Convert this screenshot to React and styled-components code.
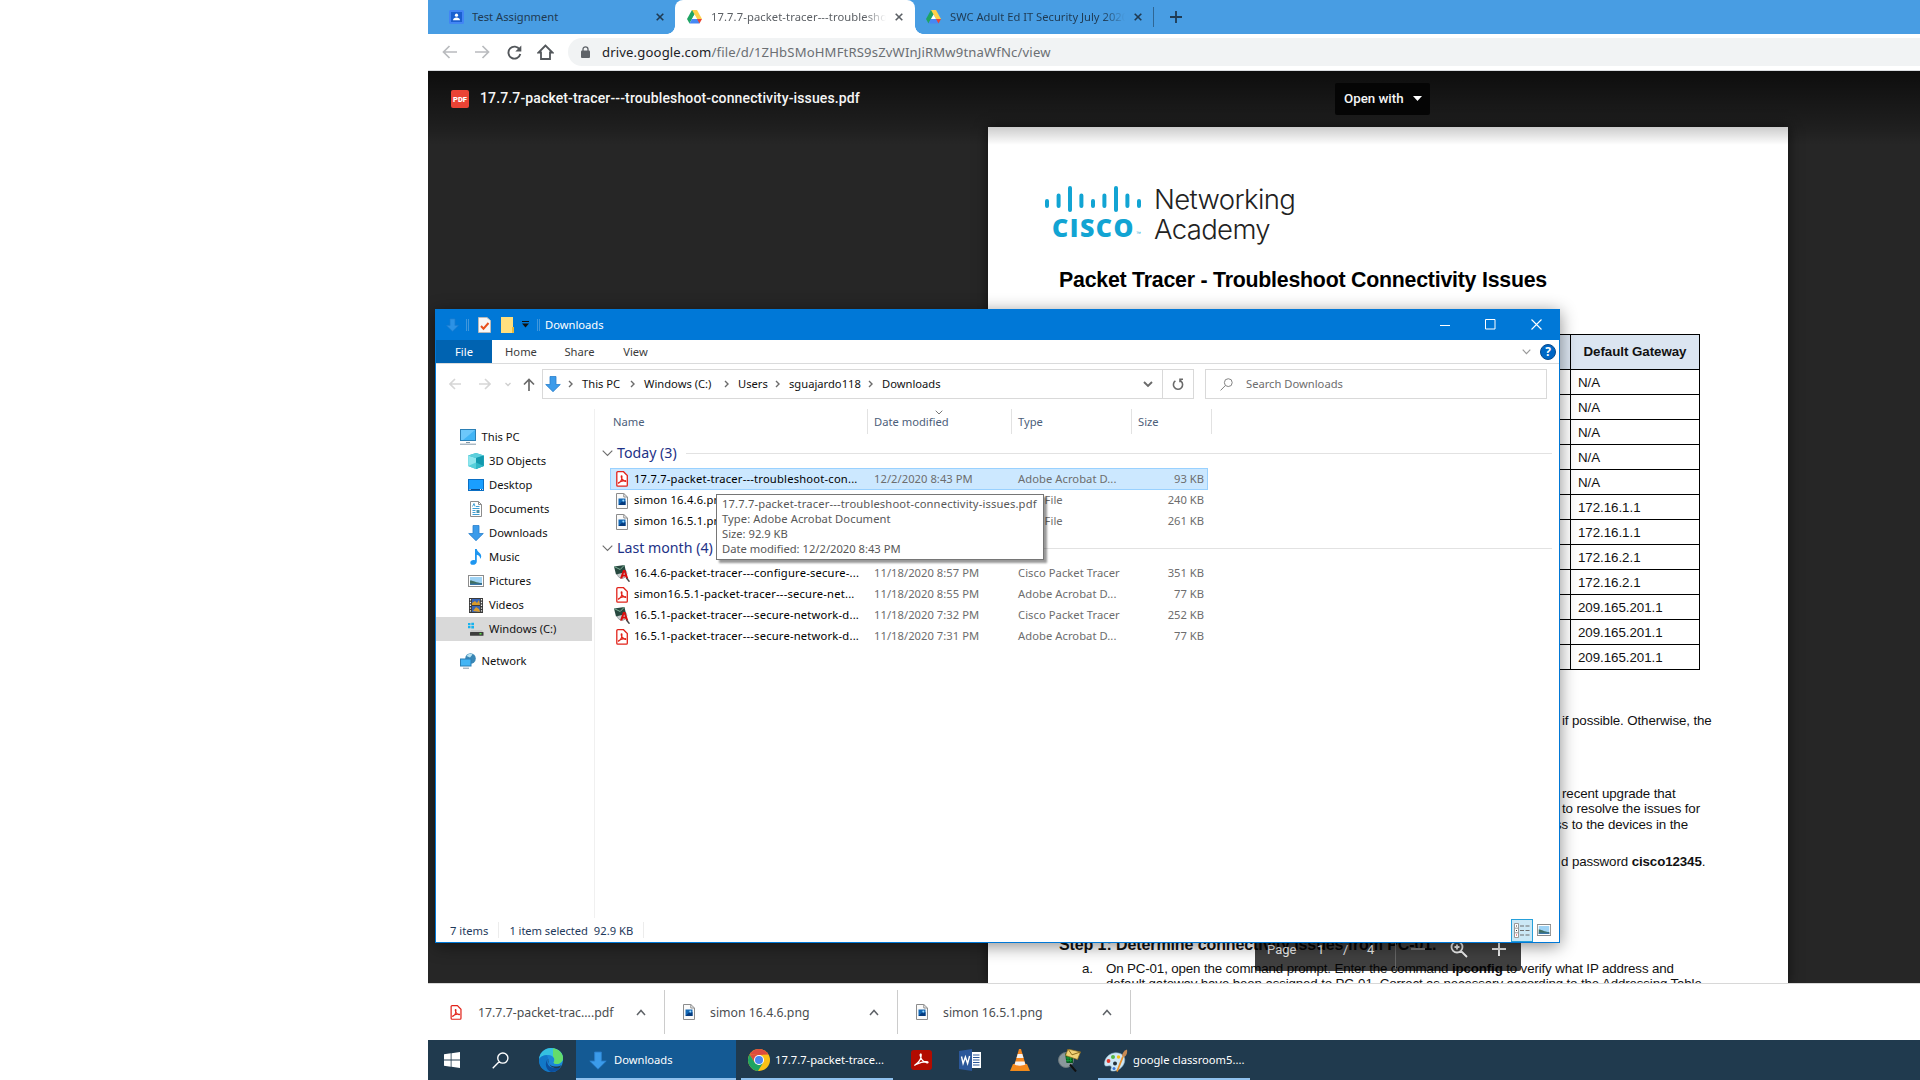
import React from "react";
import styled, { createGlobalStyle, css } from "styled-components";

const UI = `"Noto Sans", "Open Sans", sans-serif`;
const ARIAL = `"Liberation Sans", Arial, sans-serif`;

const GlobalStyle = createGlobalStyle`
  *, *::before, *::after { box-sizing: border-box; }
  html, body { margin: 0; padding: 0; background: #fff; overflow: hidden; }
  svg { display: block; flex: none; }
`;

/* ---------- shell ---------- */
const Desktop = styled.div`
  display: flex;
  justify-content: flex-end;
  width: 1920px;
  height: 1080px;
  overflow: hidden;
  background: #fff;
  font-family: ${UI};
  font-size: 11.2px;
`;
const Screen = styled.div`
  position: relative;
  display: flex;
  flex-direction: column;
  width: 1492px;
  height: 1080px;
  overflow: hidden;
`;
const Label = styled.span`
  display: block;
  flex: none;
  white-space: nowrap;
  width: ${(p) => (p.$w ? `${p.$w}px` : "auto")};
  margin-left: ${(p) => p.$ml || 0}px;
  padding-bottom: ${(p) => (p.$up ? 2 : 0)}px;
  font-size: ${(p) => (p.$size ? `${p.$size}px` : "inherit")};
  letter-spacing: ${(p) => p.$ls || 0}px;
  text-align: ${(p) => p.$align || "left"};
`;
const IconBox = styled.span`
  display: flex;
  flex: none;
  align-items: center;
  justify-content: center;
  width: ${(p) => p.$w}px;
  margin-left: ${(p) => p.$ml || 0}px;
`;

/* ---------- browser ---------- */
const TabStrip = styled.div`
  display: flex;
  align-items: center;
  flex: none;
  height: 34px;
  background: #489de3;
`;
const Tab = styled.div`
  position: relative;
  display: flex;
  align-items: center;
  flex: none;
  width: ${(p) => p.$w}px;
  height: 34px;
  padding-left: ${(p) => p.$pl}px;
  color: #1f3a52;
  ${(p) =>
    p.$active &&
    css`
      background: #fff;
      color: #5c6065;
      border-radius: 8px 8px 0 0;
      &::before, &::after {
        content: "";
        position: absolute;
        bottom: 0;
        width: 8px;
        height: 8px;
      }
      &::before { left: -8px; background: radial-gradient(circle at 0 0, transparent 7.5px, #fff 8px); }
      &::after { right: -8px; background: radial-gradient(circle at 100% 0, transparent 7.5px, #fff 8px); }
    `}
`;
const TabTitle = styled.span`
  flex: none;
  width: ${(p) => p.$w}px;
  margin-left: ${(p) => p.$ml || 8}px;
  padding-bottom: 2px;
  overflow: hidden;
  white-space: nowrap;
  letter-spacing: ${(p) => p.$ls || 0}px;
  ${(p) => p.$fade && css`mask-image: linear-gradient(to right, #000 calc(100% - 22px), transparent);`}
`;
const TabDivider = styled.span`
  width: 1px;
  height: 20px;
  background: #2f6694;
`;
const AddressRow = styled.div`
  display: flex;
  align-items: center;
  flex: none;
  height: 37px;
  padding-left: 14px;
  border-bottom: 1px solid #dadce0;
  background: #fff;
`;
const Omnibox = styled.div`
  display: flex;
  align-items: center;
  flex: 1;
  height: 28px;
  margin-left: 13px;
  padding-left: 13px;
  border-radius: 14px 0 0 14px;
  background: #f1f3f4;
  font-size: 13.1px;
  color: #6b6f73;
  b { font-weight: 400; color: #202124; }
`;
const Viewer = styled.main`
  position: relative;
  display: flex;
  flex: none;
  height: 912px;
  padding: 56px 0 0 560px;
  overflow: hidden;
  background: #262626;
`;
const ViewerHeader = styled.header`
  position: absolute;
  z-index: 2;
  inset: 0 0 auto 0;
  display: flex;
  align-items: center;
  height: 74px;
  padding: 0 0 19px 23px;
  background: linear-gradient(to bottom, rgba(0,0,0,.65), rgba(0,0,0,.2) 56px, rgba(0,0,0,0));
  color: #f5f5f5;
  font-family: Roboto, sans-serif;
  font-weight: 500;
`;
const OpenWith = styled.div`
  display: flex;
  align-items: center;
  width: 95px;
  height: 32px;
  margin-left: auto;
  margin-right: 490px;
  padding-left: 9px;
  border-radius: 2px;
  background: #050505;
`;
const Page = styled.article`
  width: 800px;
  height: 856px;
  padding: 58px 0 0 71px;
  overflow: hidden;
  background: #fff;
  box-shadow: 0 0 12px rgba(0,0,0,.6);
  font-family: ${ARIAL};
  font-size: 13.33px;
  color: #111;
`;
const Brand = styled.div`
  display: flex;
  height: 60px;
  margin-left: -15px;
`;
const BrandMark = styled.div`
  width: 110px;
`;
const CiscoWord = styled.div`
  display: flex;
  margin: 1px 0 0 8px;
  color: #12a4d3;
  font: 800 25px/28px "Open Sans", sans-serif;
  letter-spacing: ${(p) => p.$ls}px;
  sub { margin-left: 1px; font: 400 5px/40px ${ARIAL}; letter-spacing: 0; }
`;
const BrandName = styled.div`
  color: #222;
  font: 300 27.5px/30px Inter, sans-serif;
  letter-spacing: ${(p) => p.$ls}px;
  white-space: nowrap;
  margin-top: -1px;
`;
const DocTitle = styled.h1`
  margin: 23px 0 0;
  font: 700 21.33px/24px ${ARIAL};
  letter-spacing: ${(p) => p.$ls || 0}px;
  white-space: nowrap;
  color: #000;
`;
const AddressTable = styled.div`
  width: 641px;
  margin-top: 42px;
  border: 1px solid #000;
  border-bottom: 0;
`;
const AddressTableRow = styled.div`
  display: grid;
  grid-template-columns: 1fr 129px;
  height: ${(p) => (p.$head ? 35 : 25)}px;
  border-bottom: 1px solid #000;
  background: ${(p) => (p.$head ? "#dbe5f1" : "#fff")};
  font-weight: ${(p) => (p.$head ? 700 : 400)};
`;
const AddressCell = styled.div`
  display: flex;
  align-items: center;
  justify-content: ${(p) => (p.$center ? "center" : "flex-start")};
  padding-left: ${(p) => (p.$center ? 0 : 7)}px;
  padding-bottom: ${(p) => (p.$center ? 2 : 0)}px;
  letter-spacing: -0.05px;
  border-left: 1px solid #000;
`;
const Paragraph = styled.p`
  margin: ${(p) => p.$mt}px 0 0 ${(p) => p.$ml}px;
  line-height: 15.5px;
  white-space: pre;
  letter-spacing: -0.11px;
`;
const StepHeading = styled.h2`
  margin: 65px 0 0;
  font: 700 16px/20px ${ARIAL};
  letter-spacing: ${(p) => p.$ls || 0}px;
  white-space: nowrap;
`;
const StepItem = styled.div`
  display: grid;
  grid-template-columns: 24px 1fr;
  margin: 6px 0 0 23px;
  line-height: 15.3px;
  white-space: pre;
  letter-spacing: -0.14px;
`;
const PageControls = styled.div`
  position: absolute;
  z-index: 2;
  left: 827px;
  bottom: 12px;
  display: flex;
  align-items: center;
  width: 266px;
  height: 44px;
  padding-left: 12px;
  border-radius: 2px;
  background: rgba(0,0,0,.75);
  color: #eee;
  font: 400 13px Roboto, sans-serif;
`;
const ControlDivider = styled.span`
  width: 1px;
  height: 40px;
  margin: 0 15px 0 18px;
  background: #666;
`;

/* ---------- download shelf ---------- */
const Shelf = styled.footer`
  display: flex;
  align-items: center;
  flex: none;
  height: 57px;
  border-top: 1px solid #d8d8d8;
  background: #fff;
  color: #4a4d50;
  font-size: 12.3px;
`;
const ShelfItem = styled.div`
  display: flex;
  align-items: center;
  flex: none;
  width: ${(p) => p.$w}px;
  height: 44px;
  padding-left: ${(p) => p.$pl}px;
  border-right: 1px solid #ccc;
`;
const Spacer = styled.span`
  flex: 1;
`;
const ShelfChevron = styled.span`
  margin-right: 18px;
`;

/* ---------- taskbar ---------- */
const Taskbar = styled.nav`
  display: flex;
  flex: none;
  height: 40px;
  background: #203a4e;
  color: #fff;
`;
const TaskButton = styled.div`
  display: flex;
  align-items: center;
  flex: none;
  width: ${(p) => p.$w}px;
  height: 40px;
  margin-left: ${(p) => p.$ml || 0}px;
  padding-left: ${(p) => p.$pl || 0}px;
  background: ${(p) => (p.$active ? "#145a94" : "transparent")};
  border-bottom: ${(p) => (p.$open ? "2px solid #8fc1ee" : "0")};
  padding-top: ${(p) => (p.$open ? 2 : 0)}px;
`;

/* ---------- explorer ---------- */
const ExplorerWindow = styled.section`
  position: absolute;
  z-index: 5;
  left: 7px;
  top: 309px;
  display: flex;
  flex-direction: column;
  width: 1125px;
  height: 634px;
  border: 1px solid #0078d7;
  background: #fff;
  box-shadow: 0 3px 16px rgba(0,0,0,.45);
  color: #111;
`;
const TitleBar = styled.div`
  display: flex;
  align-items: center;
  flex: none;
  height: 30px;
  padding-bottom: 1px;
  background: #0078d7;
  color: #fff;
`;
const QuickDivider = styled.span`
  flex: none;
  width: 3px;
  height: 12px;
  margin-left: ${(p) => p.$ml}px;
  border: solid #3f97dd;
  border-width: 0 1px;
`;
const Ribbon = styled.div`
  display: flex;
  align-items: stretch;
  flex: none;
  height: 24px;
  border-bottom: 1px solid #dadbdc;
`;
const RibbonTab = styled.div`
  display: flex;
  align-items: center;
  justify-content: center;
  width: ${(p) => p.$w}px;
  height: 23px;
  background: ${(p) => (p.$primary ? "#0063b1" : "transparent")};
  color: ${(p) => (p.$primary ? "#fff" : "#3b3b3b")};
`;
const RibbonTools = styled.div`
  display: flex;
  align-items: center;
  gap: 9px;
  margin-left: auto;
  padding-right: 3px;
`;
const HelpBadge = styled.span`
  display: flex;
  align-items: center;
  justify-content: center;
  width: 16px;
  height: 16px;
  border: 1px solid #0a4a8c;
  border-radius: 50%;
  background: #0067c5;
  color: #fff;
  font: 700 12px ${UI};
`;
const NavBar = styled.div`
  display: flex;
  align-items: center;
  flex: none;
  height: 30px;
  margin-top: 5px;
  padding-left: 13px;
`;
const PathBox = styled.div`
  display: flex;
  align-items: center;
  flex: none;
  width: 652px;
  height: 30px;
  margin-left: 7px;
  padding-left: 2px;
  border: 1px solid #d9d9d9;
`;
const RefreshCell = styled.div`
  display: flex;
  align-items: center;
  justify-content: center;
  width: 31px;
  height: 28px;
  border-left: 1px solid #d9d9d9;
`;
const SearchBox = styled.div`
  display: flex;
  align-items: center;
  width: 342px;
  height: 30px;
  margin-left: 11px;
  padding-left: 14px;
  border: 1px solid #d9d9d9;
  color: #6d6d6d;
`;
const Panes = styled.div`
  display: flex;
  flex: none;
  height: 509px;
  margin-top: 10px;
`;
const Tree = styled.aside`
  display: flex;
  flex-direction: column;
  flex: none;
  width: 159px;
  padding-top: 16px;
  border-right: 1px solid #f0f0f0;
`;
const TreeRow = styled.div`
  display: flex;
  align-items: center;
  width: 156px;
  height: 24px;
  margin-top: ${(p) => p.$mt || 0}px;
  padding-left: ${(p) => (p.$root ? 24 : 32)}px;
  background: ${(p) => (p.$selected ? "#d9d9d9" : "transparent")};
  gap: 5px;
`;
const FilePane = styled.div`
  flex: 1;
  display: flex;
  flex-direction: column;
`;
const ColumnHeads = styled.div`
  display: flex;
  height: 25px;
  color: #4c607a;
`;
const ColumnHead = styled.div`
  position: relative;
  display: flex;
  align-items: center;
  flex: none;
  width: ${(p) => p.$w}px;
  padding-left: ${(p) => p.$pl || 6}px;
  border-right: 1px solid #e2e2e2;
`;
const SortMark = styled.span`
  position: absolute;
  left: 67px;
  top: 1px;
`;
const GroupHead = styled.div`
  display: flex;
  align-items: center;
  height: 22px;
  margin-top: ${(p) => p.$mt}px;
  padding: 0 7px 0 7px;
  color: #1e3287;
  font-size: 14.2px;
`;
const GroupRule = styled.span`
  flex: 1;
  height: 1px;
  margin-left: 8px;
  background: #e2e2e2;
`;
const FileRow = styled.div`
  display: grid;
  grid-template-columns: 258px 144px 186px;
  align-items: center;
  width: 598px;
  height: ${(p) => (p.$selected ? 22 : 21)}px;
  margin-left: 15px;
  padding-left: 5px;
  border: 1px solid ${(p) => (p.$selected ? "#99d1ff" : "transparent")};
  background: ${(p) => (p.$selected ? "#cce8ff" : "transparent")};
  color: #6d6d6d;
`;
const FileMeta = styled.div`
  display: flex;
  justify-content: space-between;
`;
const FileList = styled.div`
  margin-top: ${(p) => p.$mt}px;
`;
const FileName = styled.div`
  display: flex;
  align-items: center;
  gap: 6px;
  color: #000;
`;
const Tooltip = styled.div`
  position: absolute;
  left: 280px;
  top: 184px;
  width: 328px;
  height: 66px;
  padding: 1px 0 0 5px;
  border: 1px solid #767676;
  background: #fff;
  box-shadow: 3px 3px 2px rgba(0,0,0,.4);
  color: #575757;
  line-height: 15px;
`;
const StatusBar = styled.div`
  display: flex;
  align-items: center;
  flex: none;
  height: 24px;
  padding-left: 14px;
  color: #1e395b;
`;
const StatusDivider = styled.span`
  width: 1px;
  height: 16px;
  margin: 0 10px;
  background: #ececec;
`;
const ViewToggle = styled.span`
  display: flex;
  align-items: center;
  justify-content: center;
  width: 22px;
  height: 23px;
  border: 1px solid #26a0da;
  background: #cbe8f6;
`;

/* ---------- icons ---------- */
const Stroke = ({ w = 12, h = 12, d, c = "#666", sw = 1.5, box }) => (
  <svg width={w} height={h} viewBox={box || `0 0 ${w} ${h}`} fill="none" stroke={c} strokeWidth={sw}>
    <path d={d} />
  </svg>
);
const CloseX = ({ c, s = 8 }) => <Stroke w={s} h={s} box="0 0 8 8" d="M.7.7l6.6 6.6M7.3.7L.7 7.3" c={c} sw={1.6} />;
const Crumb = () => <Stroke w={5} h={8} d="M1 1l3 3-3 3" c="#6b6b6b" sw={1.4} />;
const DownArrow = ({ w = 16, h = 16, o = 1 }) => (
  <svg width={w} height={h} viewBox="0 0 16 16" opacity={o}>
    <path d="M5 .5h6v8h4.3L8 15.700.7 8.500H5z" fill="#3b9bea" stroke="#2a7fcb" strokeWidth=".8" />
  </svg>
);
const Classroom = () => (
  <svg width="15" height="14" viewBox="0 0 15 14">
    <rect width="15" height="14" rx="1.500" fill="#4285f4" />
    <rect x="2" y="2" width="11" height="10" fill="#1a5fd0" />
    <circle cx="7.500" cy="5.200" r="1.600" fill="#fff" />
    <path d="M4 10.200c0-3.600 7-3.600 7 0z" fill="#fff" />
  </svg>
);
const Drive = () => (
  <svg width="15" height="14" viewBox="0 0 15 14">
    <path d="M5 0h5L5 9 2.500 13.500 0 9z" fill="#1fa463" />
    <path d="M5 0h5l5 9h-5z" fill="#ffd04b" />
    <path d="M2.500 13.500L5 9h7l.500 4.500z" fill="#4688f4" />
    <path d="M10 9h5l-2.500 4.500z" fill="#ea4335" />
    <path d="M7.500 4.500L5 9h5z" fill="#fff" />
  </svg>
);
const PdfFile = ({ w = 12, h = 16 }) => (
  <svg width={w} height={h} viewBox="0 0 12 16" fill="none" stroke="#e2231a">
    <path d="M1.800.700h5.700L11.300 4.500v9.700a1 1 0 0 1-1 1H1.800a1 1 0 0 1-1-1V1.700a1 1 0 0 1 1-1z" fill="#fff" strokeWidth="1.300" />
    <path d="M2.800 12c2-1.300 3.200-4 3.200-6.500 0-1-1-.8-.8.300.4 2.200 2 4 4 4.600 1 .2.800-.9-.3-.8-2.200 0-4.300.7-6 1.800-.8.500-.5 1-.1.600z" strokeWidth="1.100" />
  </svg>
);
const PngFile = ({ w = 12, h = 16 }) => (
  <svg width={w} height={h} viewBox="0 0 12 16">
    <path d="M.500.500h7.300L11.500 4v11.500H.500z" fill="#fafafa" stroke="#8c8c8c" />
    <path d="M7.800.500V4h3.700" fill="none" stroke="#8c8c8c" />
    <rect x="2.500" y="5.500" width="7" height="6.500" fill="#1267b4" />
    <path d="M2.500 12l3.500-3.500 1.500 1L9.500 8v4z" fill="#063a7d" />
    <circle cx="7.300" cy="7.400" r="1" fill="#9fdcff" />
  </svg>
);
const PktFile = () => (
  <svg width="16" height="17" viewBox="0 0 16 17">
    <circle cx="8" cy="8.500" r="4.800" fill="#c9ced0" stroke="#a0a6a8" />
    <path d="M0 1.500L10.500 0l1.500 7L2 9.500z" fill="#27483f" />
    <path d="M0 1.500l6.200 3L10.500 0" fill="none" stroke="#7fb39a" />
    <path d="M6 13.500L9 5h2.300l3 8.500h-2.300l-.6-1.900H8.900l-.6 1.900zM9.400 9.700h1.600L10.200 7.200z" fill="#d90d0d" />
    <path d="M12.500 13l3 3.700" stroke="#444" strokeWidth="1.500" />
  </svg>
);
const PcIcon = () => (
  <svg width="16" height="16" viewBox="0 0 16 16">
    <rect x=".5" y=".5" width="15" height="11" fill="#43b5f5" stroke="#2b7fb5" />
    <path d="M1 1h14L3 11H1z" fill="#8ad6ff" opacity=".6" />
    <path d="M6 13.500h4M0 15.200h16" stroke="#8499a8" />
  </svg>
);
const CubeIcon = () => (
  <svg width="16" height="16" viewBox="0 0 16 16">
    <path d="M8 0l7.800 2.500v10.500L8 16 .2 13V2.500z" fill="#26b2c4" />
    <path d="M.2 2.500L8 5v11L.2 13z" fill="#8fe6ee" />
    <path d="M8 0l7.800 2.500L8 5 .2 2.500z" fill="#5ccfdc" />
    <path d="M8 5l7.800-2.500v10.500L8 16z" fill="#1199ae" />
    <path d="M8 9.500L15.800 13 8 16 .2 13z" fill="#3dc4d2" opacity=".7" />
  </svg>
);
const DesktopIcon = () => (
  <svg width="16" height="12" viewBox="0 0 16 12">
    <rect x=".5" y=".5" width="15" height="11" fill="#1a9fff" stroke="#0b6fc4" />
    <path d="M1 10.500h14" stroke="#0a4f94" />
    <path d="M1.500 10.500h1M12 10.500h1M14 10.500h.8" stroke="#fff" />
  </svg>
);
const DocIcon = () => (
  <svg width="12" height="16" viewBox="0 0 12 16">
    <path d="M.500.500H8.500L11.500 3.500v12H.500z" fill="#fff" stroke="#8c8c8c" />
    <path d="M8.500.500v3h3" fill="none" stroke="#8c8c8c" />
    <path d="M2.500 5.500L4 2.500l1 3M6 5.500h3.500M2.500 7.500h7M2.500 9.500h3M2.500 11.500h3M2.500 13.500h7" fill="none" stroke="#3fa0d6" />
    <rect x="6.500" y="9" width="3" height="3" fill="#4a90a8" />
  </svg>
);
const MusicIcon = () => (
  <svg width="12" height="16" viewBox="0 0 12 16">
    <path d="M5 0h1.800c.3 3 4.700 4 4.400 7.500-.1 1.300-.7 2-1.200 2.500.4-2.500-1-3.700-3.200-4.300V12.500c0 4-6.500 4.500-6.500 1.200 0-2.200 2.500-3.200 4.700-2.400z" fill="#1e96f0" />
  </svg>
);
const PictureIcon = ({ w = 16, h = 12 }) => (
  <svg width={w} height={h} viewBox="0 0 16 12" preserveAspectRatio="none">
    <rect x=".5" y=".5" width="15" height="11" fill="#fff" stroke="#8c8c8c" />
    <rect x="2" y="2" width="12" height="8" fill="#9fd3f5" />
    <path d="M2 5.500c4 0 6 2.500 12 2.500v2H2z" fill="#3f6f63" />
    <path d="M2 8.600h12V10H2z" fill="#3a76a8" />
  </svg>
);
const VideoIcon = () => (
  <svg width="14" height="15" viewBox="0 0 14 15">
    <rect width="14" height="15" fill="#3a3a3a" />
    <rect x="3" y="1" width="8" height="6" fill="#3866b8" />
    <rect x="3" y="8" width="8" height="6" fill="#3866b8" />
    <path d="M3 5l3-2 2 2 2-3 1 5H3zM4 13l3-4 3 2 1 3z" fill="#d89b2c" />
    <path d="M1.500 1v14M12.500 1v14" stroke="#f2f2f2" strokeWidth="1.200" strokeDasharray="1.400 1.400" />
  </svg>
);
const DriveDisk = () => (
  <svg width="16" height="14" viewBox="0 0 16 14">
    <path d="M0 1h2.500v2.300H0zM3.300.700H6v2.600H3.300zM0 4h2.500v2.300H0zM3.300 4H6v2.600H3.300z" fill="#19b3ee" />
    <path d="M3 8h11l1 2H2z" fill="#c9c9c9" />
    <rect x="2" y="10" width="13.500" height="3.700" rx=".5" fill="#3d3d3d" />
    <rect x="11.500" y="11" width="2" height="1.500" fill="#5ee04b" />
  </svg>
);
const NetworkIcon = () => (
  <svg width="16" height="16" viewBox="0 0 16 16">
    <circle cx="10.500" cy="5.500" r="5.300" fill="#3a87b5" />
    <path d="M6.500 3c2-2.600 5-2.500 6-1.500L10 4.500z" fill="#b9e3f2" />
    <rect x=".5" y="6" width="10.500" height="7" fill="#43b5f5" stroke="#2b7fb5" />
    <path d="M3 15.200h6" stroke="#8499a8" />
  </svg>
);
const Edge = () => (
  <svg width="24" height="24" viewBox="0 0 24 24">
    <circle cx="12" cy="12" r="12" fill="#1b86d8" />
    <path d="M0 11C1 4 6 0 12 0c8 0 12 5.500 12 10 0 4-3.500 6-6.500 6-2.500 0-3.500-1-2.500-2.500C16.500 11 14 7 9.500 7 5 7 1 9 0 11z" fill="#35c1e0" />
    <path d="M14 .2C20 1 24 5.500 24 10c0 4-3.500 6-6.500 6-2.500 0-3.500-1-2.500-2.500 1-1.700.5-3.500-1-5z" fill="#63dc6c" />
    <path d="M9 10c-4 4-1 13 9 12.500C12 26 0 23.500 0 12c1-3 4-5 8-4.800z" fill="#1278c8" />
    <path d="M9 10.500c-3 6 3 11.500 12.500 9-2 3-6 4.500-9.500 4.500-5-2-7-9-3-13.500z" fill="#0c4f9e" />
    <path d="M9.300 10.300c-1.500 4 1.200 8 6.700 8.200 3 0 5-.6 6.500-1.600-1 2-2 3-3 3.200-6 1-11-3-10.200-9.800z" fill="#203a4e" />
  </svg>
);
const Chrome = () => (
  <svg width="22" height="22" viewBox="0 0 22 22">
    <circle cx="11" cy="11" r="11" fill="#fbc116" />
    <path d="M1.500 5.500A11 11 0 0 1 20.500 5.500L11 6z" fill="#dd4b3e" />
    <path d="M1.500 5.500l5.200 8L11 6z" fill="#dd4b3e" />
    <path d="M1.500 5.500A11 11 0 0 0 10 22l5.200-8.500-4.200 2.500-4.300-2.500z" fill="#1da462" />
    <circle cx="11" cy="11" r="5" fill="#fff" />
    <circle cx="11" cy="11" r="4" fill="#4a86f0" />
  </svg>
);
const Acrobat = () => (
  <svg width="21" height="20" viewBox="0 0 21 20">
    <rect width="21" height="20" rx="3" fill="#b30b00" />
    <path d="M4 15c3-2 6.200-6 6.200-10 0-1.500-1.300-1.200-1 .5.600 3.500 3.500 6.500 6.800 7.300 1.500.2 1.300-1.200-.5-1.200-3.500 0-7 1-10.500 2.700-1.200.8-1.500 1.300-1 .7z" fill="none" stroke="#fff" strokeWidth="1.300" />
  </svg>
);
const Word = () => (
  <svg width="23" height="22" viewBox="0 0 23 22">
    <rect x="11" y="3" width="11" height="16" fill="#fff" />
    <path d="M14 6h6.500M14 8.500h6.500M14 11h6.500M14 13.500h6.500M14 16h6.500" stroke="#2b579a" />
    <path d="M0 2l13-2v22L0 20z" fill="#2b579a" />
    <path d="M2.500 7.500l1.600 7 2.300-6.500 2.200 6.500 2-7.500" fill="none" stroke="#fff" strokeWidth="1.400" />
  </svg>
);
const Vlc = () => (
  <svg width="20" height="22" viewBox="0 0 20 22">
    <path d="M3 15h14l3 7H0z" fill="#f08a1c" />
    <path d="M9 0h2l5 17c-2 2.500-10 2.500-12 0z" fill="#f5861f" />
    <path d="M7.700 5h4.600l1.200 4h-7zM5.500 12.500h9l.9 3c-3 1.500-8 1.500-10.800 0z" fill="#f3f3f3" />
  </svg>
);
const Tracer = () => (
  <svg width="23" height="23" viewBox="0 0 23 23">
    <circle cx="8" cy="11" r="7.500" fill="#8a979c" stroke="#69757a" />
    <path d="M7 4.500h8V14H8.500z" fill="#0c5a22" />
    <path d="M8 6.500h6M8 9h6M8 11.500h6M10 5v8M12.500 5v8" stroke="#17a53a" strokeWidth=".8" />
    <path d="M10 0l12.500 3-3 7.500L7.500 6.500z" fill="#f1d176" stroke="#8a6a1c" strokeWidth=".7" />
    <path d="M10 0l4 5.800L22.500 3" fill="none" stroke="#8a6a1c" />
    <path d="M12 15.500l6 7" stroke="#111" strokeWidth="2" />
  </svg>
);
const Paint = () => (
  <svg width="24" height="23" viewBox="0 0 24 23">
    <path d="M10 4c7-1 12 3 10.500 9S13 22.500 8 22c-3-.3 1-4-1.500-5S.5 19 .5 14.500 4 5 10 4z" fill="#cfe7f5" stroke="#8db6cf" strokeWidth=".6" />
    <circle cx="9" cy="8" r="2" fill="#56b947" />
    <circle cx="14.500" cy="8" r="1.700" fill="#f3c317" />
    <circle cx="4.500" cy="12" r="1.900" fill="#e2372b" />
    <circle cx="11" cy="14.500" r="2" fill="#26323b" />
    <circle cx="10" cy="19.500" r="1.500" fill="#3c76d6" />
    <path d="M13 22.500l6-15" stroke="#e8902c" strokeWidth="1.800" />
    <path d="M18 7c.5-3 2-5.500 5-6.500.5 3 0 5.500-2.700 7.500z" fill="#c98b53" />
  </svg>
);
const Magnifier = ({ s = 16, c = "#fff", sw = 1.3 }) => (
  <Stroke w={s} h={s} box="0 0 16 16" c={c} sw={sw} d="M15 5.700A4.800 4.800 0 1 1 5.400 5.700 4.800 4.800 0 1 1 15 5.700zM6.700 9.200L.7 15.300" />
);
const CiscoBars = () => (
  <svg width="98" height="27" viewBox="0 0 98 27" stroke="#12a4d3" strokeWidth="4" strokeLinecap="round">
    <path d="M3 16v5M14.600 10.500v10.500M26 3v22M37.400 10.500v10.500M49 16v5M60.400 10.500v10.500M72 3v22M83.400 10.500v10.500M95 16v5" />
  </svg>
);

const gateways = ["N/A", "N/A", "N/A", "N/A", "N/A", "172.16.1.1", "172.16.1.1", "172.16.2.1", "172.16.2.1", "209.165.201.1", "209.165.201.1", "209.165.201.1"];
const tree = [
  ["3D Objects", CubeIcon], ["Desktop", DesktopIcon], ["Documents", DocIcon], ["Downloads", DownArrow],
  ["Music", MusicIcon], ["Pictures", PictureIcon], ["Videos", VideoIcon], ["Windows (C:)", DriveDisk],
];
const crumbs = [["This PC", 48], ["Windows (C:)", 80], ["Users", 37], ["sguajardo118", 79], ["Downloads", 68]];
const today = [
  { name: "17.7.7-packet-tracer---troubleshoot-con...", date: "12/2/2020 8:43 PM", type: "Adobe Acrobat D...", size: "93 KB", Icon: PdfFile, selected: true },
  { name: "simon 16.4.6.png", date: "12/2/2020 8:36 PM", type: "PNG File", size: "240 KB", Icon: PngFile },
  { name: "simon 16.5.1.png", date: "12/2/2020 8:35 PM", type: "PNG File", size: "261 KB", Icon: PngFile },
];
const lastMonth = [
  { name: "16.4.6-packet-tracer---configure-secure-...", date: "11/18/2020 8:57 PM", type: "Cisco Packet Tracer", size: "351 KB", Icon: PktFile },
  { name: "simon16.5.1-packet-tracer---secure-net...", date: "11/18/2020 8:55 PM", type: "Adobe Acrobat D...", size: "77 KB", Icon: PdfFile },
  { name: "16.5.1-packet-tracer---secure-network-d...", date: "11/18/2020 7:32 PM", type: "Cisco Packet Tracer", size: "252 KB", Icon: PktFile },
  { name: "16.5.1-packet-tracer---secure-network-d...", date: "11/18/2020 7:31 PM", type: "Adobe Acrobat D...", size: "77 KB", Icon: PdfFile },
];

const Files = ({ items, mt }) => (
  <FileList $mt={mt}>
    {items.map(({ name, date, type, size, Icon, selected }, i) => (
      <FileRow key={i} $selected={selected}>
        <FileName>
          <IconBox $w={12}><Icon /></IconBox>
          <Label $up $ls={0.2}>{name}</Label>
        </FileName>
        <Label $up $ls={0.04}>{date}</Label>
        <FileMeta>
          <Label $up $ls={0.06}>{type}</Label>
          <Label $up $align="right">{size}</Label>
        </FileMeta>
      </FileRow>
    ))}
  </FileList>
);
const Group = ({ title, mt, w }) => (
  <GroupHead $mt={mt}>
    <Stroke w={11} h={7} d="M.7.700l4.800 4.800L10.300.7" c="#6d6d6d" sw={1.1} />
    <Label $up $w={w} $ml={4}>{title}</Label>
    <GroupRule />
  </GroupHead>
);

const Explorer = () => (
  <ExplorerWindow>
    <TitleBar>
      <IconBox $w={14} $ml={9}><DownArrow w={13} h={16} o={0.75} /></IconBox>
      <QuickDivider $ml={7} />
      <IconBox $w={13} $ml={9}>
        <svg width="13" height="16" viewBox="0 0 13 16">
          <path d="M.500.500H9L12.500 3.500v12H.500z" fill="#f7f7f7" stroke="#b9b9b9" />
          <path d="M3 9l2.500 2.700L10.500 6" fill="none" stroke="#e8501c" strokeWidth="2" />
        </svg>
      </IconBox>
      <IconBox $w={13} $ml={10}>
        <svg width="13" height="16" viewBox="0 0 13 16">
          <path d="M0 0h12v10h1v6H0z" fill="#ffdf7e" />
          <path d="M11 10h2v6h-2z" fill="#e8b93c" />
        </svg>
      </IconBox>
      <IconBox $w={7} $ml={8}>
        <svg width="7" height="7" viewBox="0 0 7 7"><path d="M0 .5h7" stroke="#111" /><path d="M0 2.500h7L3.500 6.500z" fill="#111" /></svg>
      </IconBox>
      <QuickDivider $ml={8} />
      <Label $ml={5}>Downloads</Label>
      <Spacer />
      <Stroke w={10} h={10} d="M0 5.500h10" c="#fff" sw={1} />
      <IconBox $w={11} $ml={35}><Stroke w={11} h={11} d="M.5.5h9.500v9.500H.5z" c="#fff" sw={1} /></IconBox>
      <IconBox $w={11} $ml={35}><Stroke w={11} h={11} d="M.5.500l10 10M10.500.500l-10 10" c="#fff" sw={1.1} /></IconBox>
      <IconBox $w={17} />
    </TitleBar>
    <Ribbon>
      <RibbonTab $w={56} $primary>File</RibbonTab>
      <RibbonTab $w={58}>Home</RibbonTab>
      <RibbonTab $w={59}>Share</RibbonTab>
      <RibbonTab $w={53}>View</RibbonTab>
      <RibbonTools>
        <Stroke w={9} h={6} d="M.7.700l3.800 4L8.300.7" c="#9a9a9a" sw={1.2} />
        <HelpBadge>?</HelpBadge>
      </RibbonTools>
    </Ribbon>
    <NavBar>
      <Stroke w={12} h={12} d="M12 6H1M6 1L1 6l5 5" c="#d6d6d6" sw={1.6} />
      <IconBox $w={13} $ml={17}><Stroke w={12} h={12} d="M0 6h11M6 1l5 5-5 5" c="#d6d6d6" sw={1.6} /></IconBox>
      <IconBox $w={6} $ml={14}><Stroke w={6} h={5} d="M.5 1L3 3.500 5.500 1" c="#cfcfcf" sw={1.3} /></IconBox>
      <IconBox $w={12} $ml={12}><Stroke w={12} h={13} d="M6 13V1.500M1 6.500l5-5 5 5" c="#6a6a6a" sw={1.7} /></IconBox>
      <PathBox>
        <DownArrow />
        <IconBox $w={5} $ml={7}><Crumb /></IconBox>
        {crumbs.map(([t, w], i) => (
          <React.Fragment key={t}>
            <Label $up $w={w} $ml={9}>{t}</Label>
            {i < 4 && <Crumb />}
          </React.Fragment>
        ))}
        <Spacer />
        <IconBox $w={10}><Stroke w={10} h={7} d="M1 1l4 4 4-4" c="#6a6a6a" sw={1.9} /></IconBox>
        <IconBox $w={9} />
        <RefreshCell>
          <svg width="12" height="13" viewBox="0 0 12 13" fill="none" stroke="#6a6a6a" strokeWidth="1.600">
            <path d="M3 3.200a4.600 4.600 0 1 0 5.600-.3M3.500.8v3.400M1 1.300h3v3" transform="matrix(-1 0 0 1 12 0)" />
          </svg>
        </RefreshCell>
      </PathBox>
      <SearchBox>
        <Magnifier s={13} c="#808080" sw={1.2} />
        <Label $up $ml={13}>Search Downloads</Label>
      </SearchBox>
    </NavBar>
    <Panes>
      <Tree>
        <TreeRow $root><PcIcon /><Label $up $ml={0.5}>This PC</Label></TreeRow>
        {tree.map(([t, Icon]) => (
          <TreeRow key={t} $selected={t === "Windows (C:)"}>
            <IconBox $w={16}><Icon /></IconBox>
            <Label $up>{t}</Label>
          </TreeRow>
        ))}
        <TreeRow $root $mt={8}><NetworkIcon /><Label $up $ml={0.5}>Network</Label></TreeRow>
      </Tree>
      <FilePane>
        <ColumnHeads>
          <ColumnHead $w={273} $pl={18}>Name</ColumnHead>
          <ColumnHead $w={144}>Date modified<SortMark><Stroke w={8} h={5} d="M.7.700L4 4 7.300.7" c="#777" sw={1} /></SortMark></ColumnHead>
          <ColumnHead $w={120}>Type</ColumnHead>
          <ColumnHead $w={80}>Size</ColumnHead>
        </ColumnHeads>
        <Group title="Today (3)" mt={8} w={61} />
        <Files items={today} mt={4} />
        <Group title="Last month (4)" mt={5} w={94} />
        <Files items={lastMonth} mt={4} />
      </FilePane>
    </Panes>
    <StatusBar>
      <Label>7 items</Label>
      <StatusDivider />
      <Label $ls={-0.06}>1 item selected</Label>
      <Label $ml={6}>92.9 KB</Label>
      <StatusDivider />
      <Spacer />
      <ViewToggle>
        <svg width="16" height="15" viewBox="0 0 16 15">
          <path d="M.5.500h4v14h-4zM.5 5.200h4M.5 9.800h4" fill="#fff" stroke="#999" />
          <path d="M2 3h1M2 7.500h1" stroke="#333" /><path d="M2 12h1" stroke="#d22" />
          <path d="M6 3h4M11.500 3h4M6 7.500h4M11.500 7.500h4M6 12h4M11.500 12h4" stroke="#6e6e6e" />
        </svg>
      </ViewToggle>
      <IconBox $w={14} $ml={4}><PictureIcon w={14} h={12} /></IconBox>
      <IconBox $w={8} />
    </StatusBar>
    <Tooltip>
      <Label $ls={0.14}>17.7.7-packet-tracer---troubleshoot-connectivity-issues.pdf</Label>
      <Label $ls={0.08}>Type: Adobe Acrobat Document</Label>
      <Label>Size: 92.9 KB</Label>
      <Label>Date modified: 12/2/2020 8:43 PM</Label>
    </Tooltip>
  </ExplorerWindow>
);

export default function App() {
  return (
    <Desktop>
      <GlobalStyle />
      <Screen>
        <TabStrip>
          <Tab $w={247} $pl={21}>
            <Classroom />
            <TabTitle $w={180}>Test Assignment</TabTitle>
            <IconBox $w={10} $ml={3}><CloseX c="#1f3a52" /></IconBox>
          </Tab>
          <Tab $w={240} $pl={12} $active>
            <Drive />
            <TabTitle $w={175} $ml={9} $ls={0.1} $fade>17.7.7-packet-tracer---troubleshoot-connectivity</TabTitle>
            <IconBox $w={10} $ml={8}><CloseX c="#5c6065" /></IconBox>
          </Tab>
          <Tab $w={238} $pl={11}>
            <Drive />
            <TabTitle $w={175} $ml={9} $fade>SWC Adult Ed IT Security July 2020</TabTitle>
            <IconBox $w={10} $ml={8}><CloseX c="#1f3a52" /></IconBox>
          </Tab>
          <TabDivider />
          <IconBox $w={12} $ml={16}><Stroke w={12} h={12} d="M6 0v12M0 6h12" c="#1f3a52" sw={1.8} /></IconBox>
        </TabStrip>
        <AddressRow>
          <Stroke w={15} h={14} d="M15 7H1.500M7.500 1l-6 6 6 6" c="#b9bbbe" sw={1.7} />
          <IconBox $w={15} $ml={18}><Stroke w={15} h={14} d="M0 7h13.500M7.500 1l6 6-6 6" c="#b9bbbe" sw={1.7} /></IconBox>
          <IconBox $w={15} $ml={17}>
            <svg width="15" height="15" viewBox="0 0 15 15">
              <path d="M12.600 4.500A6 6 0 1 0 13.300 9" fill="none" stroke="#53575b" strokeWidth="1.900" />
              <path d="M14.300.5v6H8.300z" fill="#53575b" />
            </svg>
          </IconBox>
          <IconBox $w={17} $ml={15}><Stroke w={17} h={16} d="M8.500 1.500L1.500 8.500H4V15h9V8.500h2.500z" c="#53575b" sw={1.8} /></IconBox>
          <IconBox $w={1} />
          <Omnibox>
            <svg width="9" height="12" viewBox="0 0 9 12">
              <rect y="4.500" width="9" height="7.500" rx="1" fill="#5f6368" />
              <path d="M2 5V3.300a2.500 2.500 0 0 1 5 0V5" fill="none" stroke="#5f6368" strokeWidth="1.300" />
            </svg>
            <Label $ml={12} $ls={0.15}><b>drive.google.com</b>/file/d/1ZHbSMoHMFtRS9sZvWInJiRMw9tnaWfNc/view</Label>
          </Omnibox>
        </AddressRow>
        <Viewer>
          <ViewerHeader>
            <svg width="18" height="18" viewBox="0 0 18 18">
              <rect width="18" height="18" rx="2" fill="#ea4335" />
              <text x="9" y="12" textAnchor="middle" fontFamily="Roboto, sans-serif" fontWeight="900" fontSize="7.500" fill="#fff">PDF</text>
            </svg>
            <Label $up $ml={11} $size={14} $ls={0.13}>17.7.7-packet-tracer---troubleshoot-connectivity-issues.pdf</Label>
            <OpenWith>
              <Label $w={61} $size={13.3}>Open with</Label>
              <IconBox $w={9} $ml={8}>
                <svg width="9" height="5" viewBox="0 0 9 5"><path d="M0 0h9L4.500 5z" fill="#fff" /></svg>
              </IconBox>
            </OpenWith>
          </ViewerHeader>
          <Page>
            <Brand>
              <BrandMark>
                <CiscoBars />
                <CiscoWord $ls={1.5}>CISCO<sub>™</sub></CiscoWord>
              </BrandMark>
              <BrandName $ls={-0.65}>Networking<br />Academy</BrandName>
            </Brand>
            <DocTitle $ls={-0.23}>Packet Tracer - Troubleshoot Connectivity Issues</DocTitle>
            <AddressTable>
              <AddressTableRow $head><span /><AddressCell $center>Default Gateway</AddressCell></AddressTableRow>
              {gateways.map((g, i) => (
                <AddressTableRow key={i}><span /><AddressCell>{g}</AddressCell></AddressTableRow>
              ))}
            </AddressTable>
            <Paragraph $mt={43} $ml={503}>if possible. Otherwise, the</Paragraph>
            <Paragraph $mt={57} $ml={503}>recent upgrade that</Paragraph>
            <Paragraph $mt={0} $ml={503}>to resolve the issues for</Paragraph>
            <Paragraph $mt={0} $ml={496}>ss to the devices in the</Paragraph>
            <Paragraph $mt={22} $ml={502}>d password <b>cisco12345</b>.</Paragraph>
            <StepHeading $ls={-0.1}>Step 1: Determine connectivity issues from PC-01.</StepHeading>
            <StepItem>
              <span>a.</span>
              <span>On PC-01, open the command prompt. Enter the command <b>ipconfig</b> to verify what IP address and{"\n"}default gateway have been assigned to PC-01. Correct as necessary according to the Addressing Table.</span>
            </StepItem>
          </Page>
          <PageControls>
            <Label $w={50}>Page</Label>
            <Label $w={26}>1</Label>
            <Label $w={24}>/</Label>
            <Label $w={10}>4</Label>
            <ControlDivider />
            <Stroke w={14} h={14} d="M0 7h14" c="#777" sw={2} />
            <IconBox $w={18} $ml={25}>
              <Stroke w={18} h={18} d="M12.500 7A5.500 5.500 0 1 1 1.500 7 5.500 5.500 0 1 1 12.500 7zM11 11l6 6M7 4.500v5M4.500 7h5" c="#eee" sw={1.8} />
            </IconBox>
            <IconBox $w={14} $ml={24}><Stroke w={14} h={14} d="M7 0v14M0 7h14" c="#eee" sw={2} /></IconBox>
          </PageControls>
        </Viewer>
        <Shelf>
          <ShelfItem $w={237} $pl={22}>
            <PdfFile w={12} h={15} />
            <Label $ml={16}>17.7.7-packet-trac....pdf</Label>
            <Spacer />
            <ShelfChevron><Stroke w={10} h={7} d="M1 6l4-4.500L9 6" c="#5f6368" sw={1.5} /></ShelfChevron>
          </ShelfItem>
          <ShelfItem $w={233} $pl={18}>
            <PngFile w={12} h={16} />
            <Label $ml={15}>simon 16.4.6.png</Label>
            <Spacer />
            <ShelfChevron><Stroke w={10} h={7} d="M1 6l4-4.500L9 6" c="#5f6368" sw={1.5} /></ShelfChevron>
          </ShelfItem>
          <ShelfItem $w={233} $pl={18}>
            <PngFile w={12} h={16} />
            <Label $ml={15}>simon 16.5.1.png</Label>
            <Spacer />
            <ShelfChevron><Stroke w={10} h={7} d="M1 6l4-4.500L9 6" c="#5f6368" sw={1.5} /></ShelfChevron>
          </ShelfItem>
        </Shelf>
        <Taskbar>
          <TaskButton $w={48} $pl={16}>
            <svg width="16" height="16" viewBox="0 0 16 16"><path d="M0 2.200L6.700 1.300v6.300H0zM7.500 1.200L16 0v7.600H7.500zM0 8.400h6.700v6.300L0 13.800zM7.500 8.400H16V16l-8.500-1.200z" fill="#fff" /></svg>
          </TaskButton>
          <TaskButton $w={48} $pl={16}><Magnifier s={17} sw={1.3} /></TaskButton>
          <TaskButton $w={52} $pl={15}><Edge /></TaskButton>
          <TaskButton $w={160} $pl={13} $active $open>
            <DownArrow w={18} h={19} />
            <Label $up $ml={7}>Downloads</Label>
          </TaskButton>
          <TaskButton $w={152} $ml={5} $pl={7} $open>
            <Chrome />
            <Label $up $ml={5}>17.7.7-packet-trace...</Label>
          </TaskButton>
          <TaskButton $w={48} $ml={18}><Acrobat /></TaskButton>
          <TaskButton $w={51}><Word /></TaskButton>
          <TaskButton $w={48}><Vlc /></TaskButton>
          <TaskButton $w={40}><Tracer /></TaskButton>
          <TaskButton $w={152} $pl={6} $open>
            <Paint />
            <Label $up $ml={5}>google classroom5....</Label>
          </TaskButton>
        </Taskbar>
        <Explorer />
      </Screen>
    </Desktop>
  );
}
